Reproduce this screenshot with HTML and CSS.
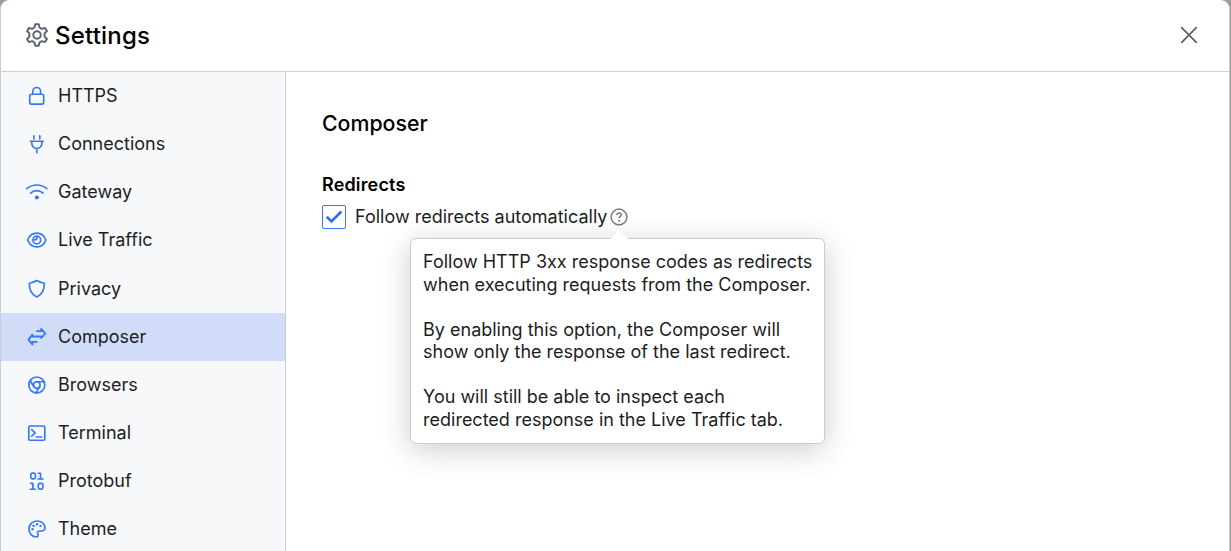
FILE: index.html
```html
<!DOCTYPE html>
<html lang="en">
<head>
<meta charset="utf-8">
<title>Settings</title>
<link rel="stylesheet" href="styles.css">
</head>
<body>
<div class="dialog">
  <header class="header">
    <svg class="icon icon-gear" viewBox="0.500 0.100 23 23"><path d="M10.300 1.400h3.400l.7 3 2.200 1.300 3.100-.9 1.800 3-2.200 2.200v3.200l2.200 2.200-1.800 3-3.100-.9-2.200 1.300-.7 3h-3.400l-.7-3-2.200-1.300-3.100.9-1.800-3 2.200-2.200V10L2.500 7.800l1.800-3 3.100.9 2.200-1.300z"/><circle cx="12" cy="11.600" r="3.600"/></svg>
    <h1 class="title">Settings</h1>
    <svg class="icon icon-close" viewBox="0 0 24 24"><path d="M4.700 4.700l14.600 14.600M19.300 4.700L4.700 19.300"/></svg>
  </header>
  <div class="body">
    <nav class="sidebar">
      <a class="item"><svg class="icon" viewBox="0 0 24 24"><rect x="4.700" y="10.200" width="14" height="9.900" rx="1.800"/><path d="M7.800 10.200V7.400a3.900 3.900 0 0 1 7.800 0v2.800"/></svg><span>HTTPS</span></a>
      <a class="item"><svg class="icon" viewBox="0 0 24 24"><path d="M8.900 3.900v3M14.800 3.900v3M5.200 9.200h13.200M6.800 9.200v2.200a5.050 5.050 0 0 0 10.100 0V9.200M11.800 16.500v4.200"/></svg><span>Connections</span></a>
      <a class="item"><svg class="icon" viewBox="0 0 24 24"><path d="M1.800 8.700C7.500 3.800 16 3.800 21.900 8.700M5.600 13.200c3.700-3.400 8.700-3.400 12.400 0"/><circle class="solid" cx="11.900" cy="17.500" r="2"/></svg><span>Gateway</span></a>
      <a class="item"><svg class="icon" viewBox="0 0 24 24"><path d="M2.700 12C4.200 8 7.600 5.100 11.800 5.100s7.600 2.900 9.100 6.900c-1.500 4-4.900 6.900-9.100 6.900S4.200 16 2.700 12z"/><circle cx="11.800" cy="12" r="3.900"/><path d="M12 9.200c.2 1.700-.8 2.700-2.600 2.600"/></svg><span>Live Traffic</span></a>
      <a class="item"><svg class="icon" viewBox="0 0 24 24"><path d="M11.800 3.500c2.200 1.400 4.500 2.200 7.500 2.700.2 6.500-2.100 11.200-7.500 13.800-5.400-2.600-7.700-7.300-7.500-13.800 3-.5 5.300-1.300 7.500-2.700z"/></svg><span>Privacy</span></a>
      <a class="item active"><svg class="icon" viewBox="0 0 24 24"><path d="M12 6.100h4.200V3.900l4 4.600-4 4.500v-1.500H7.400V9.700l-4 4.900 4 4.900v-2.600h4.400"/></svg><span>Composer</span></a>
      <a class="item"><svg class="icon" viewBox="0 0 24 24"><circle cx="11.800" cy="12" r="8"/><circle cx="11.800" cy="12" r="3.300"/><path d="M11.800 8.700h7.300M8.900 13.700L5.100 7.500M14.700 13.600l-3.800 6.300"/></svg><span>Browsers</span></a>
      <a class="item"><svg class="icon" viewBox="0 0 24 24"><rect x="3.800" y="5" width="16" height="14.200" rx="1.200"/><path d="M6.700 8.600l3.500 3.300-3.500 3.300M11.300 16h5.500"/></svg><span>Terminal</span></a>
      <a class="item"><svg class="icon" viewBox="0 0 24 24"><rect x="5.800" y="4.100" width="4.600" height="5.800" rx="1.600"/><path d="M13.200 4.200h2.300v5.900M12.900 10h5.200M5.700 14.400h2.200v5.700M5.300 20.200h5.100"/><rect x="13.300" y="14.300" width="4.600" height="5.800" rx="1.600"/></svg><span>Protobuf</span></a>
      <a class="item"><svg class="icon" viewBox="0 0 24 24"><path d="M11.900 4c4.700 0 8 3 8 6.700 0 2.300-1.500 3.300-3.400 3.300h-2.300c-1.500 0-2.200 1.300-1.500 2.600.8 1.500.5 3.500-1.400 3.400C7.200 19.800 3.900 16.400 3.900 12S7.400 4 11.900 4z"/><g class="solid"><circle cx="7.500" cy="12.300" r="1.200"/><circle cx="8.600" cy="8.900" r="1.200"/><circle cx="12" cy="7.300" r="1.200"/><circle cx="15.500" cy="8.900" r="1.200"/></g></svg><span>Theme</span></a>
    </nav>
    <main class="content">
      <h2 class="heading">Composer</h2>
      <h3 class="subheading">Redirects</h3>
      <div class="option">
        <span class="checkbox"><svg class="check" viewBox="0 0 22 22"><path d="M3.800 10.800l4.700 4.600 9.900-9.800"/></svg></span>
        <span class="label">Follow redirects automatically</span>
        <span class="help">
          <svg class="help-icon" viewBox="0 0 18 18"><circle cx="9" cy="9" r="7.900"/><path d="M6.800 7.100c.1-1.400 1-2.200 2.300-2.200s2.200.8 2.200 1.900c0 1.600-2.200 1.700-2.200 3.500"/><circle class="dot" cx="9.100" cy="12.800" r="1"/></svg>
          <span class="tooltip">
            <span class="para">Follow HTTP 3xx response codes as redirects<br>when executing requests from the Composer.</span>
            <span class="para">By enabling this option, the Composer will<br>show only the response of the last redirect.</span>
            <span class="para">You will still be able to inspect each<br>redirected response in the Live Traffic tab.</span>
          </span>
        </span>
      </div>
    </main>
  </div>
</div>
</body>
</html>
```
FILE: styles.css
```css
* { box-sizing: border-box; }
body {
  margin: 0;
  height: 551px;
  overflow: hidden;
  background: #9b9b9d;
  font-family: Inter, "Liberation Sans", sans-serif;
  font-size: 18px;
  color: #1d1d1f;
}
.dialog {
  width: 1230px;
  height: 571px;
  display: flex;
  flex-direction: column;
  background: #fff;
  border: solid #c9cedf;
  border-width: 0 1px;
  border-radius: 9px 9px 0 0;
  overflow: hidden;
}
.header {
  height: 72px;
  flex: none;
  display: flex;
  align-items: center;
  padding: 0 28.5px 2px 23.5px;
  border-bottom: 1px solid #c9cedf;
}
.icon {
  width: 24px;
  height: 24px;
  flex: none;
  fill: none;
  stroke: #3676fb;
  stroke-width: 1.65;
  stroke-linecap: round;
  stroke-linejoin: round;
}
.icon-gear { stroke: #5d6372; stroke-width: 1.9; }
.icon-close { stroke: #5a5e6b; stroke-width: 1.7; margin-left: auto; }
.solid { fill: #3676fb; stroke: none; }
.title {
  margin: 2px 0 0 6.5px;
  font-size: 24px;
  font-weight: 500;
  letter-spacing: 0.2px;
  color: #000;
}
.body { flex: 1; min-height: 0; display: flex; }
.sidebar {
  width: 285px;
  flex: none;
  background: #f6f8fa;
  border-right: 1px solid #c9cedf;
  overflow: hidden;
}
.item {
  height: 48.15px;
  display: flex;
  align-items: center;
  gap: 9px;
  padding-left: 24px;
}
.item span { margin-top: -1px; }
.active { background: #d1dcf8; }
.active .icon { stroke-width: 1.85; }
.content { flex: 1; padding: 35px 36px; }
.heading {
  margin: 0;
  font-size: 21.3px;
  line-height: 32px;
  font-weight: 500;
  color: #000;
}
.subheading {
  margin: 34px 0 0;
  font-size: 18px;
  line-height: 24px;
  font-weight: 600;
  letter-spacing: 0.15px;
  color: #000;
}
.option { display: flex; align-items: center; height: 24px; margin-top: 8px; }
.label { margin-top: -1px; }
.checkbox {
  width: 24px;
  height: 24px;
  border: 1px solid #3676fb;
  border-radius: 2px;
  margin-right: 9px;
}
.check { display: block; width: 22px; height: 22px; fill: none; stroke: #3270f0; stroke-width: 2.8; }
.help { position: relative; display: flex; margin-left: 2.6px; }
.help-icon { width: 18px; height: 18px; fill: none; stroke: #777985; stroke-width: 1.5; }
.dot { fill: #777985; stroke: none; }
.tooltip {
  position: absolute;
  top: 30px;
  left: -200px;
  width: 415px;
  display: flex;
  flex-direction: column;
  gap: 22.5px;
  padding: 12px;
  background: #fff;
  border: 1px solid #c9cad3;
  border-radius: 6px;
  box-shadow: 0 6px 30px rgba(0, 0, 0, 0.2);
  line-height: 22.5px;
  white-space: nowrap;
}
.tooltip::before {
  content: "";
  position: absolute;
  top: -9px;
  left: 199px;
  width: 18px;
  height: 9px;
  background: #fff;
  clip-path: polygon(50% 0, 100% 100%, 0 100%);
}
```
